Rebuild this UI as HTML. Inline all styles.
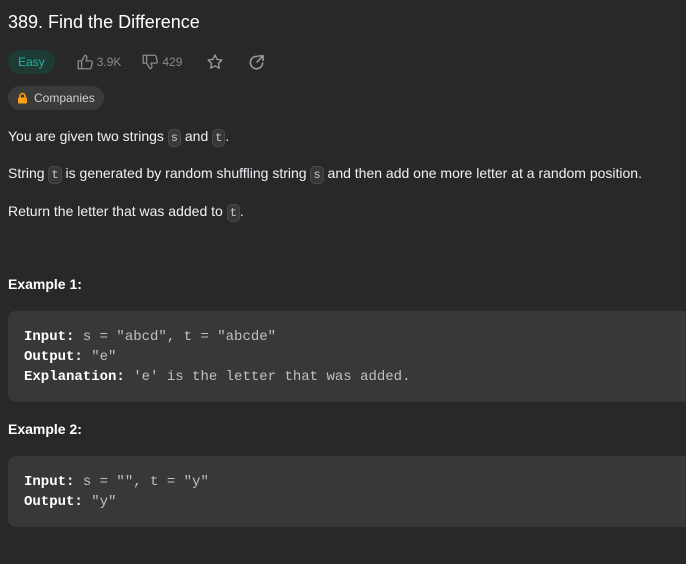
<!DOCTYPE html>
<html><head><style>
body{margin:0;background:#282828;width:686px;height:564px;overflow:hidden;font-family:"Liberation Sans",sans-serif;color:#eff1f6}
.t{position:absolute;left:8px;top:12px;font-size:18px;color:#fff}
.row{position:absolute;top:50px;left:8px;display:flex;align-items:center;height:24px;font-size:12px;color:#8a8a8a}
.easy{background:#1e3a35;color:#1cb8a0;border-radius:12px;padding:0 10px;height:24px;line-height:24px;font-size:12px;margin-right:21px}
.it{display:flex;align-items:center}
.it svg{margin-right:3px}
.comp{position:absolute;left:8px;top:86px;height:24px;border-radius:12px;background:#3a3a3a;color:#d0d0d0;font-size:12px;line-height:24px;padding:0 9px 0 9px;display:flex;align-items:center}
p{position:absolute;left:8px;margin:0;font-size:14px;line-height:20px}
code{font-family:"Liberation Mono",monospace;font-size:12px;background:#383838;border:1px solid #4a4a4a;border-radius:5px;padding:1px 2px;color:#c8c8c8}
h4{position:absolute;left:8px;margin:0;font-size:14px;font-weight:bold;color:#fff}
pre{position:absolute;left:8px;width:690px;margin:0;background:#383838;border-radius:8px;font-family:"Liberation Mono",monospace;font-size:14px;line-height:20px;color:#c0c0c0;padding:16px 16px;box-sizing:border-box}
pre b{color:#fff}
</style></head><body>
<div class="t">389. Find the Difference</div>
<div class="row"><span class="easy">Easy</span>
<span class="it" style="margin-right:20px"><svg width="18" height="18" viewBox="0 0 16 16" fill="none" stroke="#8a8a8a" stroke-width="1.2"><path d="M2 7h3v7H2zM5 7l3-5c1 0 2 1 1.6 2.5L9 7h4.2c.9 0 1.5.8 1.3 1.6l-1.2 4.6c-.2.5-.6.8-1.2.8H5"/></svg>3.9K</span>
<span class="it" style="margin-right:24px"><svg width="18" height="18" viewBox="0 0 16 16" fill="none" stroke="#8a8a8a" stroke-width="1.2"><path d="M2 9h3V2H2zM5 9l3 5c1 0 2-1 1.6-2.5L9 9h4.2c.9 0 1.5-.8 1.3-1.6l-1.2-4.6C13.1 2.3 12.7 2 12.1 2H5"/></svg>429</span>
<span class="it" style="margin-right:21px"><svg width="18" height="18" viewBox="0 0 16 16" fill="none" stroke="#9a9a9a" stroke-width="1.2" stroke-linejoin="round"><path d="M8 1.8l1.9 3.9 4.2.6-3 3 .7 4.2L8 11.5l-3.8 2 .7-4.2-3-3 4.2-.6z"/></svg></span>
<span class="it"><svg width="17" height="17" viewBox="0 0 16 16" fill="none" stroke="#9a9a9a" stroke-width="1.5" stroke-linecap="round"><path d="M13.8 8.5A5.8 5.8 0 1 1 8.5 2.3M10 1.8h4.2V6M14 2L8.5 7.5"/></svg></span>
</div>
<div class="comp"><svg width="11" height="12" viewBox="0 0 11 12"><path d="M3 5.5V4a2.5 2.5 0 0 1 5 0v1.5" fill="none" stroke="#ffa116" stroke-width="1.5"/><rect x="1" y="5.5" width="9" height="6" rx="1" fill="#ffa116"/></svg><span style="display:inline-block;width:6px"></span>Companies</div>
<p style="top:126px">You are given two strings <code>s</code> and <code>t</code>.</p>
<p style="top:163px">String <code>t</code> is generated by random shuffling string <code>s</code> and then add one more letter at a random position.</p>
<p style="top:201px">Return the letter that was added to <code>t</code>.</p>
<h4 style="top:276px">Example 1:</h4>
<pre style="top:311px;height:91px"><b>Input:</b> s = "abcd", t = "abcde"
<b>Output:</b> "e"
<b>Explanation:</b> 'e' is the letter that was added.</pre>
<h4 style="top:421px">Example 2:</h4>
<pre style="top:456px;height:71px"><b>Input:</b> s = "", t = "y"
<b>Output:</b> "y"</pre>
</body></html>
